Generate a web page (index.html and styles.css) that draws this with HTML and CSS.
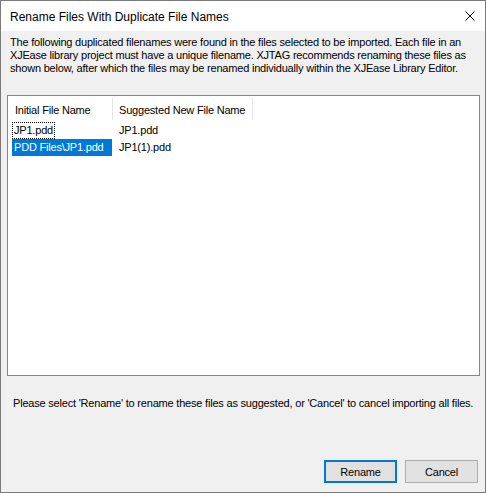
FILE: index.html
```html
<!DOCTYPE html>
<html>
<head>
<meta charset="utf-8">
<link rel="stylesheet" href="styles.css">
</head>
<body>
<div class="window">
  <div class="titlebar">
    <span class="title">Rename Files With Duplicate File Names</span>
    <svg class="close" width="10" height="10" viewBox="0 0 10 10"><path d="M0.5 0.5 L9.5 9.5 M9.5 0.5 L0.5 9.5" stroke="#000" stroke-width="1" fill="none"/></svg>
  </div>
  <div class="client">
    <p class="desc">The following duplicated filenames were found in the files selected to be imported. Each file in an XJEase library project must have a unique filename. XJTAG recommends renaming these files as shown below, after which the files may be renamed individually within the XJEase Library Editor.</p>
    <div class="listview">
      <div class="header">
        <div class="hcell c1">Initial File Name</div>
        <div class="hcell c2">Suggested New File Name</div>
      </div>
      <div class="row">
        <div class="cell c1"><span class="label focus">JP1.pdd</span></div>
        <div class="cell c2">JP1.pdd</div>
      </div>
      <div class="row">
        <div class="cell c1"><span class="label selected">PDD Files\JP1.pdd</span></div>
        <div class="cell c2">JP1(1).pdd</div>
      </div>
    </div>
    <p class="note">Please select 'Rename' to rename these files as suggested, or 'Cancel' to cancel importing all files.</p>
    <div class="buttons">
      <button class="btn default">Rename</button>
      <button class="btn">Cancel</button>
    </div>
  </div>
</div>
</body>
</html>
```
FILE: styles.css
```css
html, body {
  margin: 0;
  padding: 0;
  background: #f0f0f0;
}
.window {
  width: 486px;
  height: 493px;
  box-sizing: border-box;
  border: 1px solid #7a7a7a;
  display: flex;
  flex-direction: column;
  font-family: "Liberation Sans", Arial, sans-serif;
  font-size: 11px;
  letter-spacing: -0.2px;
  color: #000;
}
.titlebar {
  height: 30px;
  background: #fff;
  display: flex;
  align-items: center;
  justify-content: space-between;
  padding: 0 10px 0 9px;
  flex: none;
}
.title {
  font-family: "Liberation Sans", Arial, sans-serif;
  font-size: 12px;
  letter-spacing: 0;
  padding-top: 2px;
}
.close {
  display: block;
}
.client {
  flex: 1;
  background: #f0f0f0;
  display: flex;
  flex-direction: column;
  padding: 0 5px 0 6px;
}
.desc {
  margin: 5px 0 0 3px;
  line-height: 13px;
  height: 59px;
}
.listview {
  height: 281px;
  box-sizing: border-box;
  border: 1px solid #828790;
  background: #fff;
  width: 473px;
  flex: none;
}
.header {
  display: flex;
  height: 26px;
}
.hcell {
  box-sizing: border-box;
  padding: 6px 0 0 7px;
  border-right: 1px solid #e5e5e5;
  margin-top: 2px;
  height: 22px;
}
.hcell.c1 { width: 105px; }
.hcell.c2 { width: 140px; padding-left: 6px; }
.row {
  display: flex;
  height: 17px;
  line-height: 17px;
}
.cell.c1 {
  width: 105px;
  padding-left: 4px;
  box-sizing: border-box;
}
.cell.c2 {
  padding-left: 6px;
}
.label {
  display: inline-block;
  padding: 0 2px;
  height: 17px;
  box-sizing: border-box;
}
.label.focus {
  outline: 1px dotted #000;
  outline-offset: -1px;
}
.label.selected {
  background: #0078d7;
  color: #fff;
  width: 100px;
}
.note {
  margin: 21px 0 0 6px;
  line-height: 13px;
}
.buttons {
  margin: auto 2px 9px 0;
  display: flex;
  justify-content: flex-end;
  gap: 8px;
}
.btn {
  width: 73px;
  height: 23px;
  box-sizing: border-box;
  border: 1px solid #adadad;
  background: #e1e1e1;
  font-family: "Liberation Sans", Arial, sans-serif;
  font-size: 11px;
  letter-spacing: -0.2px;
  color: #000;
  padding: 0;
  margin: 0;
}
.btn.default {
  border: 2px solid #0078d7;
}
```
